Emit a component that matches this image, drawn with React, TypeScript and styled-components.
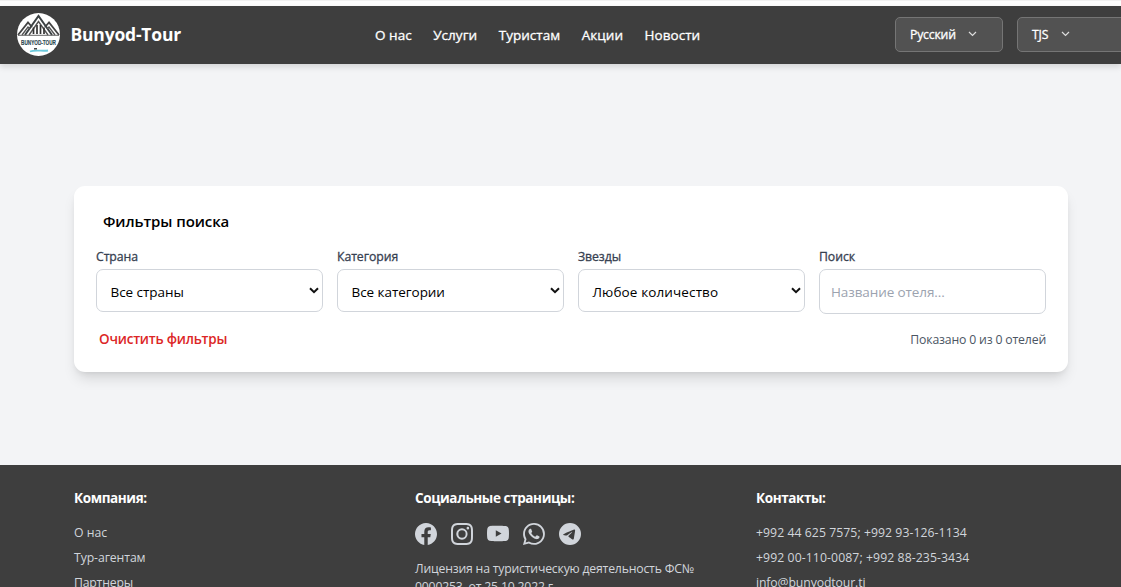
import React from "react";
import styled, { createGlobalStyle } from "styled-components";
import { BsFacebook, BsInstagram, BsYoutube, BsWhatsapp, BsTelegram } from "react-icons/bs";

const GlobalStyle = createGlobalStyle`
  * { box-sizing: border-box; }
  html, body { margin: 0; padding: 0; overflow: hidden; }
  body {
    font-family: "Open Sans", "Noto Sans", sans-serif;
    font-size: 12.25px;
    color: #000;
    background: #f3f4f6;
  }
`;

const Page = styled.div`
  width: 100%;
  height: 587px;
  overflow: hidden;
  display: flex;
  flex-direction: column;
  background: #f3f4f6;
`;

const TopStrip = styled.div`
  flex: none;
  height: 6px;
  background: #fdfdfd;
  border-top: 1px solid #f0f0f0;
`;

const Header = styled.header`
  flex: none;
  height: 58px;
  display: flex;
  align-items: center;
  padding: 0 0 2px 17px;
  background: #3e3e3e;
  box-shadow: 0 3px 6px rgba(0, 0, 0, 0.13);
`;

const Brand = styled.div`
  flex: none;
  width: 358px;
  display: flex;
  align-items: center;
  gap: 10.5px;
`;

const BrandName = styled.span`
  font-size: 17.5px;
  font-weight: 700;
  color: #fff;
  letter-spacing: -0.2px;
`;

const Nav = styled.nav`
  flex: none;
  width: 520px;
  display: flex;
  gap: 21.5px;
  padding-top: 2px;
`;

const NavLink = styled.a`
  font-size: 13.5px;
  font-weight: 500;
  line-height: 20px;
  color: #fff;
  white-space: nowrap;
  letter-spacing: 0.04px;
  -webkit-text-stroke: 0.3px #fff;
`;

const HeaderButton = styled.button<{ $width: number; $gap: number }>`
  flex: none;
  width: ${(p) => p.$width}px;
  height: 35px;
  display: flex;
  align-items: center;
  gap: ${(p) => p.$gap}px;
  margin: 0 14px 0 0;
  padding: 0 14px;
  border: 1px solid #757575;
  border-radius: 5px;
  background: #525252;
  color: #fff;
  font: 500 12.25px "Open Sans", sans-serif;
  letter-spacing: -0.2px;
  span { -webkit-text-stroke: 0.3px #fff; }
`;

const Main = styled.main`
  flex: none;
  height: 401px;
  padding: 122px 53px 0 74px;
`;

const Card = styled.section`
  height: 186px;
  padding: 24px 22px 0;
  border-radius: 11px;
  background: #fff;
  box-shadow: 0 9px 14px -3px rgba(0, 0, 0, 0.13), 0 3px 6px -3px rgba(0, 0, 0, 0.1);
`;

const CardTitle = styled.h3`
  margin: 0 0 16px 7px;
  font-size: 15px;
  line-height: 22px;
  font-weight: 600;
  letter-spacing: -0.08px;
`;

const Fields = styled.div`
  display: grid;
  grid-template-columns: repeat(4, 1fr);
  gap: 14px;
`;

const Label = styled.label`
  display: block;
  height: 17px;
  margin-bottom: 4px;
  font-size: 12.25px;
  line-height: 17px;
  font-weight: 500;
  color: #374151;
  letter-spacing: -0.06px;
  -webkit-text-stroke: 0.3px #374151;
`;

const SelectBox = styled.div<{ $ls: number }>`
  height: 43px;
  display: flex;
  align-items: center;
  justify-content: space-between;
  padding: 3px 3px 0 13.5px;
  border: 1px solid #d1d5db;
  border-radius: 7px;
  font-size: 13.5px;
  letter-spacing: ${(p) => p.$ls}px;
  svg { margin-top: -3px; }
`;

const SearchInput = styled.input`
  display: block;
  width: 100%;
  height: 45px;
  padding: 0 11px;
  border: 1px solid #d1d5db;
  border-radius: 7px;
  background: #fff;
  font: 13.5px "Open Sans", sans-serif;
  letter-spacing: -0.1px;
  &::placeholder { color: #9ca3af; }
`;

const CardFooter = styled.div`
  display: flex;
  justify-content: space-between;
  align-items: center;
  height: 20px;
  margin-top: 15px;
`;

const ClearButton = styled.button`
  border: 0;
  padding: 0 0 0 3px;
  background: none;
  color: #dc2626;
  font: 600 13.5px "Open Sans", sans-serif;
  letter-spacing: -0.22px;
`;

const Count = styled.span`
  color: #4b5563;
  font-size: 12.25px;
  letter-spacing: -0.17px;
`;

const Footer = styled.footer`
  flex: 1 0 122px;
  display: grid;
  grid-template-columns: 341px 341px 1fr;
  padding: 23px 0 0 74px;
  background: #3e3e3e;
  color: #d1d5db;
`;

const FooterTitle = styled.h4`
  margin: 0 0 12px;
  font-size: 13.5px;
  line-height: 20px;
  font-weight: 700;
  color: #fff;
  letter-spacing: -0.4px;
`;

const FooterLine = styled.div<{ $ls?: number }>`
  height: 25px;
  line-height: 25px;
  font-size: 12.25px;
  white-space: nowrap;
  letter-spacing: ${(p) => p.$ls ?? 0}px;
`;

const Socials = styled.div`
  display: flex;
  gap: 14px;
  padding-top: 3px;
  margin-left: -0.5px;
  height: 40px;
`;

const License = styled.p`
  margin: 0;
  width: 300px;
  font-size: 12.25px;
  line-height: 18px;
  letter-spacing: -0.2px;
`;

const Logo = () => (
  <svg width="43" height="43" viewBox="0 0 43 43">
    <circle cx="21.5" cy="21.5" r="21.5" fill="#fff" />
    <path d="M1 22 L11 9.5 L15 14 M42 22 L32 9.5 L28 14" fill="none" stroke="#444" strokeWidth="1.8" />
    <path d="M8 22 L21.5 3 L35 22" fill="none" stroke="#3c4244" strokeWidth="2" />
    <path d="M5 22 L11 14 L13 16 M38 22 L32 14 L30 16 M12 22 L21.5 8.5 L31 22" fill="none" stroke="#555" strokeWidth="1.4" />
    <path d="M16.5 14.5V21 M20 12V21 M23.5 12V21 M27 14.5V21" stroke="#333" strokeWidth="1.7" />
    <path d="M1 22.3H42" stroke="#666" strokeWidth="1" />
    <text x="4" y="31.8" textLength="35" lengthAdjust="spacingAndGlyphs" fontFamily="Liberation Sans" fontWeight="700" fontSize="8" fill="#2f4a52" stroke="#2f4a52" strokeWidth="0.2">
      BUNYOD-TOUR
    </text>
    <path d="M17 35.8h3" stroke="#444" strokeWidth="1.6" />
    <path d="M13 38.5C18 36.5 26 38.5 31 37.5" fill="none" stroke="#6cc9dc" strokeWidth="1.8" />
  </svg>
);

const SmallChevron = () => (
  <svg width="9" height="6" viewBox="0 0 9 6" fill="none" stroke="#ddd" strokeWidth="1.2">
    <path d="M1 1l3.5 3.5L8 1" />
  </svg>
);

const SelectChevron = () => (
  <svg width="10" height="7" viewBox="0 0 10 7" fill="none" stroke="#111" strokeWidth="2">
    <path d="M1 1.2l4 4 4-4" />
  </svg>
);

const filters = [
  { label: "Страна", value: "Все страны", spacing: -0.05 },
  { label: "Категория", value: "Все категории", spacing: -0.05 },
  { label: "Звезды", value: "Любое количество", spacing: 0.12 },
];

export default function App() {
  return (
    <Page>
      <GlobalStyle />
      <TopStrip />
      <Header>
        <Brand>
          <Logo />
          <BrandName>Bunyod-Tour</BrandName>
        </Brand>
        <Nav>
          <NavLink>О нас</NavLink>
          <NavLink>Услуги</NavLink>
          <NavLink>Туристам</NavLink>
          <NavLink>Акции</NavLink>
          <NavLink>Новости</NavLink>
        </Nav>
        <HeaderButton $width={108} $gap={12}><span>Русский</span><SmallChevron /></HeaderButton>
        <HeaderButton $width={120} $gap={13}><span>TJS</span><SmallChevron /></HeaderButton>
      </Header>
      <Main>
        <Card>
          <CardTitle>Фильтры поиска</CardTitle>
          <Fields>
            {filters.map(({ label, value, spacing }) => (
              <div key={label}>
                <Label>{label}</Label>
                <SelectBox $ls={spacing}>{value}<SelectChevron /></SelectBox>
              </div>
            ))}
            <div>
              <Label>Поиск</Label>
              <SearchInput placeholder="Название отеля..." />
            </div>
          </Fields>
          <CardFooter>
            <ClearButton>Очистить фильтры</ClearButton>
            <Count>Показано 0 из 0 отелей</Count>
          </CardFooter>
        </Card>
      </Main>
      <Footer>
        <div>
          <FooterTitle>Компания:</FooterTitle>
          <FooterLine>О нас</FooterLine>
          <FooterLine $ls={-0.1}>Тур-агентам</FooterLine>
          <FooterLine $ls={-0.2}>Партнеры</FooterLine>
        </div>
        <div>
          <FooterTitle>Социальные страницы:</FooterTitle>
          <Socials>
            <BsFacebook size={22} />
            <BsInstagram size={22} />
            <BsYoutube size={22} />
            <BsWhatsapp size={22} />
            <BsTelegram size={22} />
          </Socials>
          <License>Лицензия на туристическую деятельность ФС№ 0000253, от 25.10.2022 г.</License>
        </div>
        <div>
          <FooterTitle>Контакты:</FooterTitle>
          <FooterLine $ls={0.05}>+992 44 625 7575; +992 93-126-1134</FooterLine>
          <FooterLine $ls={0.08}>+992 00-110-0087; +992 88-235-3434</FooterLine>
          <FooterLine $ls={-0.12}>info@bunyodtour.tj</FooterLine>
        </div>
      </Footer>
    </Page>
  );
}
